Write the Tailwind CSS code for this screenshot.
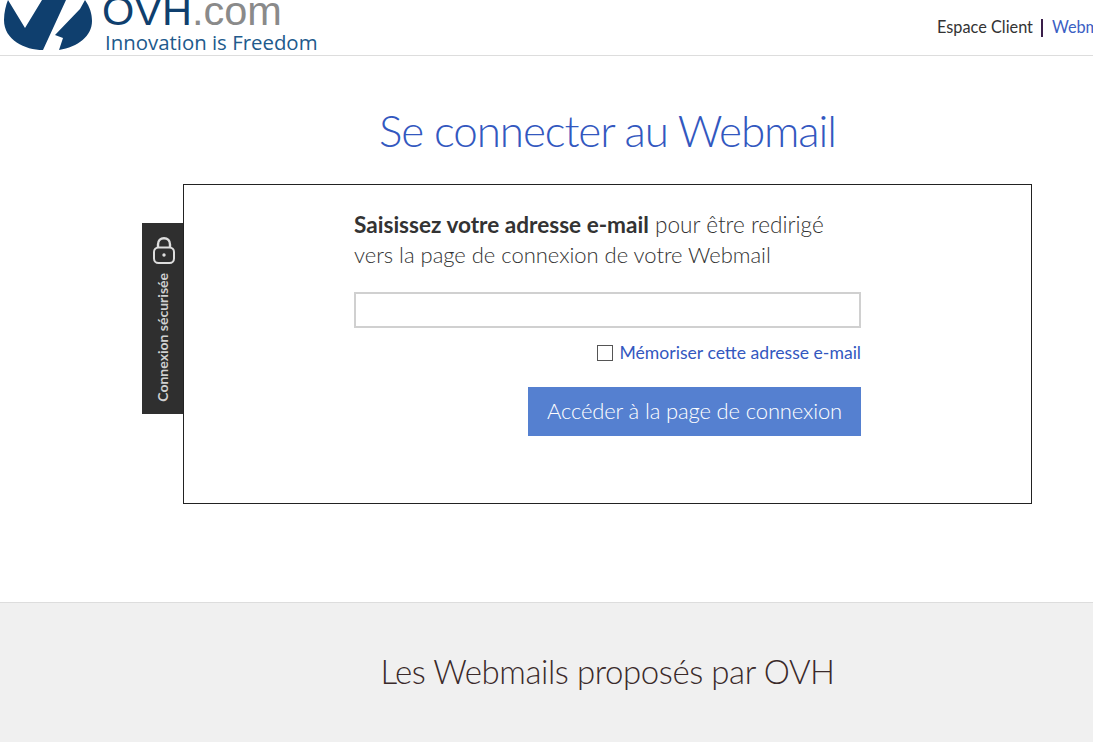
<!DOCTYPE html>
<html lang="fr">

<head>
    <meta charset="UTF-8" />
    <title>Se connecter au Webmail</title>
    <script src="https://cdn.jsdelivr.net/npm/@tailwindcss/browser@4"></script>
</head>

<body class="h-[742px] overflow-hidden bg-white font-['Lato',sans-serif] text-[#333]">
    <header class="flex h-[56px] items-center justify-between overflow-hidden border-b border-[#ddd]">
        <div class="flex h-[55px] items-start overflow-hidden">
            <svg class="h-[55px] w-[96px] shrink-0" viewBox="0 0 96 55">
                <path fill="#0f3f6e" d="M8 0 L25 28 L42 0 L66 0 L43 50 C25 50 4 40 4 20 C4 12 6 5 8 0Z" />
                <path fill="#0f3f6e" d="M85 0 C90 7 92 14 92 21 C92 36 78 47 59 50 L63 38 L55 35 L80 9 Z" />
            </svg>
            <div class="ml-[6px] flex flex-col leading-none">
                <span class="mt-[-8px] h-[38px] font-['Liberation_Sans',sans-serif] text-[41.5px] leading-[38px] text-[#0f3f6e]">OVH<span class="text-[#8a8a8a]">.com</span></span>
                <span class="ml-[3px] font-['Open_Sans',sans-serif] text-[20.4px] leading-[24px] text-[#215a8c]">Innovation is Freedom</span>
            </div>
        </div>
        <nav class="flex w-[156px] shrink-0 items-center overflow-hidden whitespace-nowrap text-[16.3px]">
            <a class="text-[#333]">Espace Client</a>
            <span class="mr-[9px] ml-[8px] h-[18px] w-[2px] shrink-0 bg-[#3a1e4a]"></span>
            <a class="text-[#3b5fc4]">Webmail</a>
        </nav>
    </header>

    <main class="h-[546px]">
        <div class="ml-[183px] w-[849px]">
            <h1 class="pt-[44px] pb-[1px] text-center text-[44px] leading-[60px] font-light tracking-[-1.1px] text-[#3358bf]">Se connecter au Webmail</h1>
        </div>
        <div class="relative mt-[23px] ml-[183px] h-[320px] w-[849px] border border-[#222]">
            <div class="absolute top-[38px] left-[-42px] flex h-[191px] w-[41px] flex-col items-center bg-[#2f2f2f] pt-[14px] text-white">
                <svg class="ml-[2px] h-[27px] w-[22px]" viewBox="0 0 22 27" fill="none" stroke="#dedede">
                    <path stroke-width="2.4" d="M5 11 V7.5 C5 3.5 7.5 1.2 11 1.2 C14.5 1.2 17 3.5 17 7.5 V11" />
                    <rect x="1" y="10.5" width="20" height="15.5" rx="4.5" stroke-width="2" />
                    <circle cx="11" cy="18" r="1.7" fill="#dedede" stroke="none" />
                </svg>
                <span class="mt-[9px] rotate-180 whitespace-nowrap text-[14px] leading-[18px] font-bold text-[#d0d0d0] [writing-mode:vertical-rl]">Connexion sécurisée</span>
            </div>
            <div class="ml-[170px] w-[507px] pt-[25px]">
                <p class="text-[22.6px] leading-[30px] font-light text-[#333]"><strong class="font-bold">Saisissez votre adresse e-mail</strong> pour être redirigé<br /><span class="text-[22px] tracking-[-0.02px]">vers la page de connexion de votre Webmail</span></p>
                <input type="text" class="mt-[22px] block h-[36px] w-full border-2 border-[#d0d0d0] bg-white" />
                <label class="mt-[15px] flex items-center justify-end gap-[7px] text-[17.6px] leading-[20px] text-[#3358bf]">
                    <span class="h-[16px] w-[16px] border border-[#555]"></span>
                    Mémoriser cette adresse e-mail
                </label>
                <div class="mt-[24px] flex justify-end">
                    <button class="h-[49px] w-[333px] bg-[#5580d0] pb-[2px] text-[22px] font-light tracking-[-0.14px] text-white">Accéder à la page de connexion</button>
                </div>
            </div>
        </div>
    </main>

    <section class="h-[140px] border-t border-[#ddd] bg-[#f0f0f0] pt-[44px]">
        <div class="ml-[183px] w-[849px]">
            <h2 class="text-center text-[33px] leading-[48px] font-light tracking-[-0.42px] text-[#3a2a2a]">Les Webmails proposés par OVH</h2>
        </div>
    </section>
</body>

</html>
